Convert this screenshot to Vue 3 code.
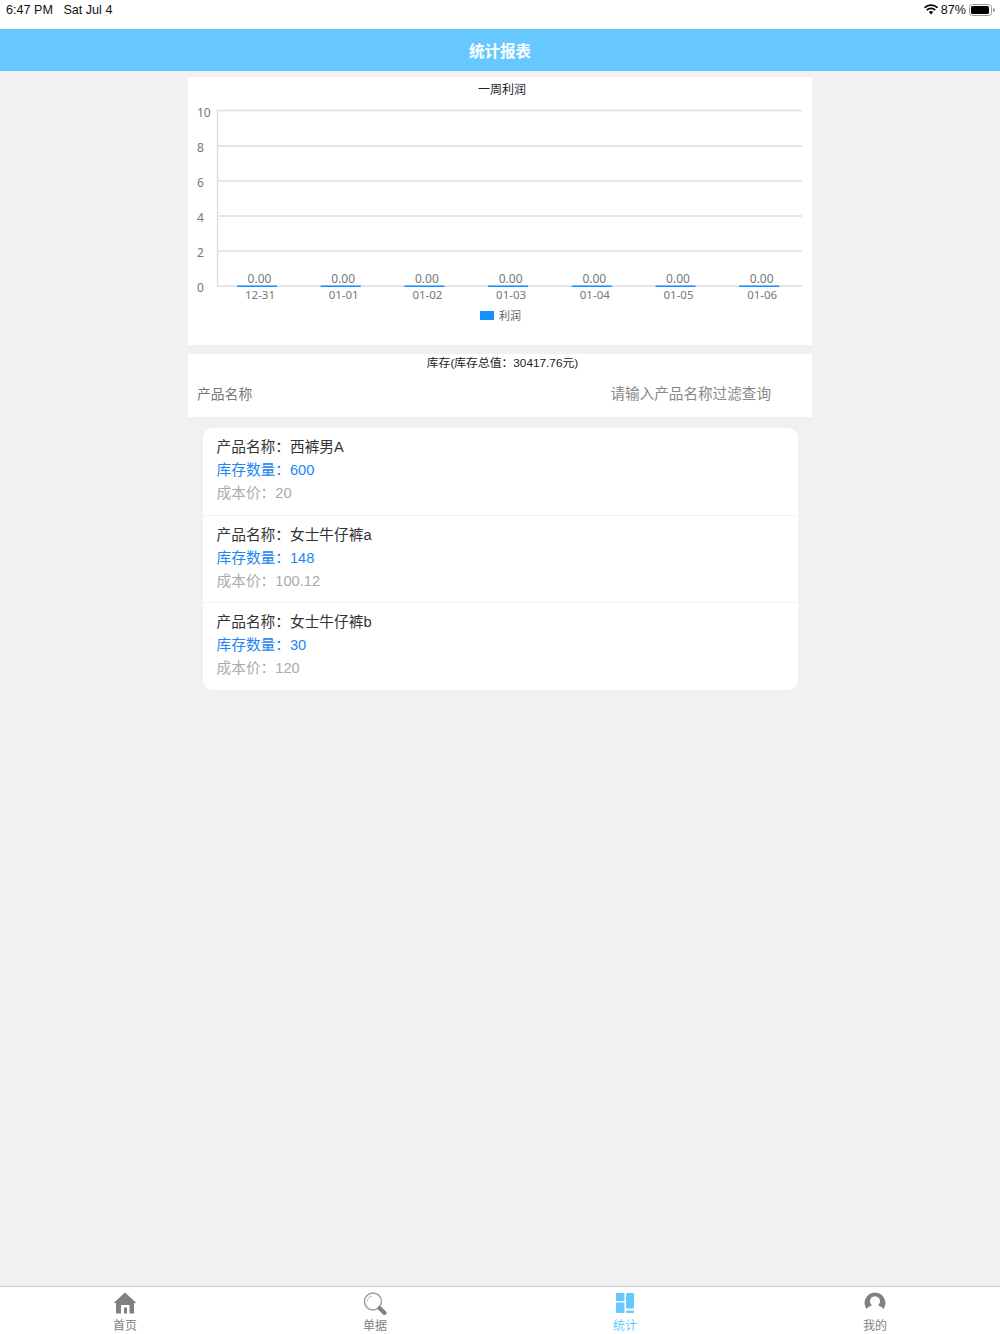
<template>
  <div class="page">
    <div class="status-bar">
      <span class="status-time">6:47 PM&nbsp;&nbsp; Sat Jul 4</span>
      <div class="status-right">
        <svg class="wifi" width="14" height="11" viewBox="0 0 15 11">
          <path d="M0.6 3.6 A10 10 0 0 1 14.4 3.6" fill="none" stroke="#000" stroke-width="1.8" />
          <path d="M3 6.1 A6.5 6.5 0 0 1 12 6.1" fill="none" stroke="#000" stroke-width="1.8" />
          <path d="M5.2 8.3 A3.2 3.2 0 0 1 9.8 8.3 L7.5 10.8 Z" fill="#000" />
        </svg>
        <span>87%</span>
        <svg width="26" height="12" viewBox="0 0 26 12">
          <rect x="0.5" y="0.5" width="22" height="11" rx="3" fill="none" stroke="#999" />
          <rect x="2" y="2" width="18" height="8" rx="1.5" fill="#000" />
          <path d="M24 4 a2 2 0 0 1 0 4 Z" fill="#999" />
        </svg>
      </div>
    </div>

    <header class="nav-bar">统计报表</header>

    <main class="content">
      <section class="panel chart-panel">
        <svg class="chart" width="624" height="268" viewBox="0 0 624 268">
          <text x="314" y="17" class="chart-title" text-anchor="middle">一周利润</text>
          <line v-for="g in gridLines" :key="g.label" x1="29" x2="614" :y1="g.y" :y2="g.y" class="grid" />
          <line x1="29.5" x2="29.5" y1="33" y2="210" class="grid" />
          <text v-for="g in gridLines" :key="'y' + g.label" x="9" :y="g.y + 6" class="axis-label">{{ g.label }}</text>
          <g v-for="(d, i) in days" :key="d">
            <rect :x="49 + i * 83.7" y="208.5" width="40" height="1.5" fill="#1890ff" />
            <text :x="71.5 + i * 83.7" y="206" class="axis-label" text-anchor="middle">0.00</text>
            <text :x="72 + i * 83.7" y="222" class="axis-label date-label" text-anchor="middle">{{ d }}</text>
          </g>
          <rect x="292" y="234" width="14" height="9" fill="#1890ff" />
          <text x="311" y="243" class="legend">利润</text>
        </svg>
      </section>

      <section class="panel stock-panel">
        <div class="stock-title">库存(库存总值：30417.76元)</div>
        <div class="filter-row">
          <span class="filter-label">产品名称</span>
          <span class="filter-input">请输入产品名称过滤查询</span>
        </div>
      </section>

      <ul class="product-list">
        <li v-for="p in products" :key="p.name" class="product">
          <div class="product-name">产品名称：{{ p.name }}</div>
          <div class="product-stock">库存数量：{{ p.stock }}</div>
          <div class="product-cost">成本价：{{ p.cost }}</div>
        </li>
      </ul>
    </main>

    <nav class="tab-bar">
      <div class="tab">
        <svg width="24" height="22" viewBox="0 0 24 22">
          <path fill-rule="evenodd" fill="#808080" d="M12 0.5 L23.5 11 L21 11 L21 21.5 L3 21.5 L3 11 L0.5 11 Z M8 13 L8 21.5 L11 21.5 L11 15.5 L14 15.5 L14 21.5 L16.5 21.5 L16.5 13 Z" />
        </svg>
        <span>首页</span>
      </div>
      <div class="tab">
        <svg width="24" height="23" viewBox="0 0 24 23" class="search-icon">
          <circle cx="10" cy="9.5" r="8.5" fill="none" stroke="#999" stroke-width="1.4" />
          <path d="M4.5 9.5 A5.5 5.5 0 0 1 9 4" fill="none" stroke="#bbb" stroke-width="1" />
          <path d="M16.5 16 L21.5 21" stroke="#808080" stroke-width="4" stroke-linecap="round" />
        </svg>
        <span>单据</span>
      </div>
      <div class="tab active">
        <svg width="24" height="22" viewBox="0 0 24 22">
          <rect x="3" y="1" width="8.5" height="8" rx="1" fill="#66c8ff" />
          <rect x="3" y="10.5" width="8.5" height="10.5" rx="1" fill="#66c8ff" />
          <rect x="13" y="1" width="8" height="15.5" rx="1" fill="#66c8ff" />
          <rect x="13" y="18.5" width="8" height="2.5" rx="1" fill="#66c8ff" />
        </svg>
        <span>统计</span>
      </div>
      <div class="tab">
        <svg width="24" height="22" viewBox="0 0 24 22">
          <path fill-rule="evenodd" fill="#808080" d="M12 0.5 A10.5 10.5 0 0 1 20.5 17 C19 15 17 14 15 13.2 A5 5 0 1 0 9 13.2 C7 14 5 15 3.5 17 A10.5 10.5 0 0 1 12 0.5 Z" />
        </svg>
        <span>我的</span>
      </div>
    </nav>
  </div>
</template>

<script setup>
const gridLines = [
  { label: '10', y: 33.5 },
  { label: '8', y: 69 },
  { label: '6', y: 104 },
  { label: '4', y: 139 },
  { label: '2', y: 174 },
  { label: '0', y: 209 }
]

const days = ['12-31', '01-01', '01-02', '01-03', '01-04', '01-05', '01-06']

const products = [
  { name: '西裤男A', stock: 600, cost: '20' },
  { name: '女士牛仔裤a', stock: 148, cost: '100.12' },
  { name: '女士牛仔裤b', stock: 30, cost: '120' }
]
</script>

<style>
body {
  background: #f1f1f1;
}
</style>

<style scoped>
.page {
  display: flex;
  flex-direction: column;
  height: 1334px;
  background: #f1f1f1;
  font-family: "Liberation Sans", "Noto Sans CJK SC", sans-serif;
  overflow: hidden;
}

.status-bar {
  display: flex;
  justify-content: space-between;
  height: 29px;
  padding: 3px 6px 0;
  box-sizing: border-box;
  background: #fff;
  font-size: 12.6px;
  line-height: 14px;
  color: #111;
}

.status-right {
  display: flex;
  align-items: flex-start;
  gap: 3px;
  margin-right: -1px;
}

.status-right svg {
  margin-top: 1px;
}

.nav-bar {
  height: 42px;
  background: #66c8ff;
  color: #fff;
  font-size: 15.5px;
  font-weight: 700;
  line-height: 45px;
  text-align: center;
}

.content {
  display: flex;
  flex: 1;
  flex-direction: column;
  align-items: center;
  padding-top: 6px;
}

.panel {
  width: 624px;
  background: #fff;
}

.chart-panel {
  height: 268px;
}

.chart {
  display: block;
}

.chart-title {
  font-size: 12px;
  fill: #222;
}

.grid {
  stroke: #dedede;
  stroke-width: 1.4;
}

.axis-label {
  font-family: "Noto Sans", "Noto Sans CJK SC", sans-serif;
  font-size: 12px;
  fill: #777;
}

.date-label {
  font-size: 11.5px;
}

.legend {
  font-family: "Noto Sans CJK SC", sans-serif;
  font-size: 11px;
  fill: #666;
}

.stock-panel {
  height: 63px;
  margin-top: 9px;
}

.stock-title {
  font-size: 11.8px;
  line-height: 18px;
  text-align: center;
  color: #222;
  padding-left: 5px;
}

.filter-row {
  display: flex;
  justify-content: space-between;
  padding: 12px 41px 0 9px;
  font-size: 13.8px;
  line-height: 20px;
  color: #777;
}

.filter-label {
  padding-top: 1px;
}

.filter-input {
  font-size: 14.6px;
  color: #888;
}

.product-list {
  width: 595px;
  margin: 11px 0 0;
  padding: 0;
  list-style: none;
  background: #fff;
  border-radius: 10px;
}

.product {
  height: 87.5px;
  padding: 8px 14px 0;
  box-sizing: border-box;
  border-bottom: 1px solid #f3f3f3;
  font-size: 14.7px;
  line-height: 23px;
}

.product:last-child {
  height: 87px;
  border-bottom: 0;
}

.product-name {
  color: #333;
}

.product-stock {
  color: #1e86f0;
}

.product-cost {
  color: #aaa;
}

.tab-bar {
  display: flex;
  height: 48px;
  box-sizing: border-box;
  background: #fff;
  border-top: 1px solid #ccc;
}

.tab {
  display: flex;
  flex: 1;
  flex-direction: column;
  align-items: center;
  padding-top: 5px;
  font-size: 12px;
  line-height: 14px;
  color: #808080;
}

.tab svg {
  display: block;
  margin-bottom: 5px;
}

.tab .search-icon {
  margin-bottom: 4px;
}

.tab.active {
  color: #66c8ff;
}
</style>
